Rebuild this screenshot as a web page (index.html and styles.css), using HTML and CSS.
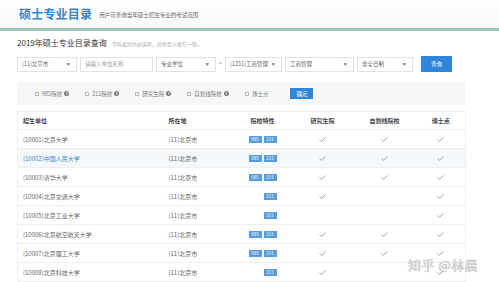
FILE: index.html
```html
<!DOCTYPE html>
<html lang="zh-CN">
<head>
    <meta charset="UTF-8">
    <meta name="viewport" content="width=device-width, initial-scale=1.0">
    <title>硕士专业目录</title>
    <link rel="stylesheet" href="styles.css">
</head>
<body>
    <div class="header">
        <h1>硕士专业目录</h1>
        <span class="sub">用户可查询当年硕士招生专业的考试范围</span>
    </div>

    <div class="main">
        <div class="query-title">
            <h2>2019年硕士专业目录查询</h2>
            <span class="note">学科类别为必选项，其他至少填写一项。</span>
        </div>

        <div class="form-row">
            <div class="select w60">(11)北京市<i>▼</i></div>
            <div class="input w73">请输入单位名称</div>
            <div class="select w60">专业学位<i>▼</i></div>
            <span class="star">*</span>
            <div class="select w57">(1251)工商管理<i>▼</i></div>
            <div class="select w69">工商管理<i>▼</i></div>
            <div class="select w56">非全日制<i>▼</i></div>
            <button class="btn btn-query">查询</button>
        </div>

        <div class="filter">
            <label class="check"><span class="box"></span>985院校<span class="q">?</span></label>
            <label class="check"><span class="box"></span>211院校<span class="q">?</span></label>
            <label class="check"><span class="box"></span>研究生院<span class="q">?</span></label>
            <label class="check"><span class="box"></span>自划线院校<span class="q">?</span></label>
            <label class="check"><span class="box"></span>博士点</label>
            <button class="btn btn-ok">确定</button>
        </div>

        <table class="list">
            <thead>
                <tr>
                    <th class="c1">招生单位</th>
                    <th class="c2">所在地</th>
                    <th class="c3 mid">院校特性</th>
                    <th class="c4 mid">研究生院</th>
                    <th class="c5 mid">自划线院校</th>
                    <th class="c6 mid">博士点</th>
                </tr>
            </thead>
            <tbody id="rows"></tbody>
        </table>
    </div>

    <div class="watermark">知乎 @林晨</div>

    <script>
        var data = [
            ["(10001)北京大学", 1, 1, 1, 1],
            ["(10002)中国人民大学", 1, 1, 1, 1],
            ["(10003)清华大学", 1, 1, 1, 1],
            ["(10004)北京交通大学", 0, 1, 0, 1],
            ["(10005)北京工业大学", 0, 0, 0, 1],
            ["(10006)北京航空航天大学", 1, 1, 1, 1],
            ["(10007)北京理工大学", 1, 1, 1, 1],
            ["(10008)北京科技大学", 0, 1, 0, 1]
        ];

        var tick = '<svg width="7" height="5" viewBox="0 0 7 5"><polyline points="0.5,2.5 2.5,4.3 6.5,0.5" fill="none" stroke="#8a8a8a" stroke-width="0.8"/></svg>';

        var html = "";
        data.forEach(function(row, i) {
            html += '<tr' + (i === 1 ? ' class="hover"' : '') + '>';
            html += '<td class="c1">' + row[0] + '</td>';
            html += '<td class="c2">(11)北京市</td>';
            html += '<td class="c3 mid"><span class="tags"><span class="tag' + (row[1] ? '' : ' hide') + '">985</span><span class="tag">211</span></span></td>';
            html += '<td class="c4 mid">' + (row[2] ? tick : '') + '</td>';
            html += '<td class="c5 mid">' + (row[3] ? tick : '') + '</td>';
            html += '<td class="c6 mid">' + (row[4] ? tick : '') + '</td>';
            html += '</tr>';
        });
        document.getElementById("rows").innerHTML = html;
    </script>
</body>
</html>
```

FILE: styles.css
```css
* {
    box-sizing: border-box;
    margin: 0;
    padding: 0;
    font-family: "Noto Sans CJK SC", "Noto Sans", sans-serif;
}

body {
    width: 499px;
    height: 282px;
    overflow: hidden;
    background: white;
    color: #555;
    position: relative;
}

.header {
    height: 31px;
    padding: 0 0 0 19px;
    display: flex;
    align-items: center;
    border-bottom: 3px solid #9dc4c9;
    background: linear-gradient(#ffffff, #f7f9f9);
}

.header h1 {
    font-size: 12px;
    font-weight: bold;
    color: #3385cc;
    letter-spacing: 0.2px;
    line-height: 16px;
}

.header .sub {
    font-size: 5.5px;
    color: #666;
    margin-left: 7px;
    margin-top: 1px;
}

.main {
    padding: 0 34px 0 17px;
}

.query-title {
    display: flex;
    align-items: center;
    height: 12px;
    margin-top: 6px;
}

.query-title h2 {
    font-size: 8px;
    font-weight: normal;
    color: #333;
    line-height: 12px;
}

.query-title .note {
    font-size: 5px;
    color: #aaa;
    margin-left: 5px;
}

.form-row {
    display: flex;
    align-items: center;
    margin-top: 7px;
    height: 16px;
}

.select, .input {
    height: 15px;
    border: 1px solid #e2e2e2;
    font-size: 5.5px;
    color: #666;
    padding-left: 4px;
    display: flex;
    align-items: center;
    justify-content: space-between;
    margin-right: 3px;
    background: white;
}

.input {
    color: #999;
}

.select i {
    font-style: normal;
    font-size: 3.5px;
    color: #777;
    margin-right: 6px;
}

.w60 { width: 60px; }
.w73 { width: 73px; }
.w57 { width: 57px; }
.w69 { width: 69px; }
.w56 { width: 56px; margin-right: 8px; }

.star {
    font-size: 6px;
    color: #999;
    width: 6px;
    margin-right: 0;
}

.btn {
    background: #2d86d8;
    color: white;
    border: none;
    font-size: 5.5px;
}

.btn-query {
    width: 31px;
    height: 16px;
}

.filter {
    margin-top: 10px;
    height: 23px;
    background: #f5f7f9;
    display: flex;
    align-items: center;
    padding-left: 18px;
}

.check {
    display: flex;
    align-items: center;
    font-size: 5.5px;
    color: #777;
    margin-right: 16px;
}

.box {
    width: 4px;
    height: 4px;
    border: 0.7px solid #bbb;
    background: white;
    margin-right: 3px;
}

.q {
    width: 5px;
    height: 5px;
    border-radius: 50%;
    background: #777;
    color: white;
    font-size: 4px;
    line-height: 5px;
    text-align: center;
    margin-left: 2px;
    font-weight: bold;
}

.btn-ok {
    width: 23px;
    height: 11px;
    margin-left: 6px;
}

.list {
    margin-top: 6px;
    width: 448px;
    border-collapse: collapse;
    border: 1px solid #f0f0f0;
    table-layout: fixed;
}

.list th, .list td {
    font-size: 6px;
    text-align: left;
    padding: 0 0 0 5px;
    border-bottom: 1px solid #efefef;
    color: #666;
}

.list th {
    height: 18px;
    font-weight: bold;
    color: #444;
}

.list td {
    height: 19px;
}

.list .mid {
    text-align: center;
    padding: 0;
}

.list tr.hover td {
    background: #f5f8fb;
}

.list tr.hover td.c1 {
    color: #3b88c9;
}

.c1 { width: 146px; }
.c2 { width: 69px; }
.c3 { width: 60px; }
.c4 { width: 60px; }
.c5 { width: 64px; }
.c6 { width: 49px; }

.tags {
    display: inline-flex;
    gap: 2px;
    vertical-align: middle;
}

.tag {
    display: inline-block;
    width: 13px;
    height: 7px;
    line-height: 7px;
    background: #5a9bdc;
    color: white;
    font-size: 4.5px;
    text-align: center;
}

.tag.hide {
    visibility: hidden;
}

.list svg {
    vertical-align: middle;
}

.watermark {
    position: absolute;
    left: 408px;
    top: 255px;
    font-size: 13px;
    color: #d8d8d8;
    text-shadow: 0 0 1px rgba(110, 110, 110, 0.7);
    letter-spacing: 0.5px;
}
```
